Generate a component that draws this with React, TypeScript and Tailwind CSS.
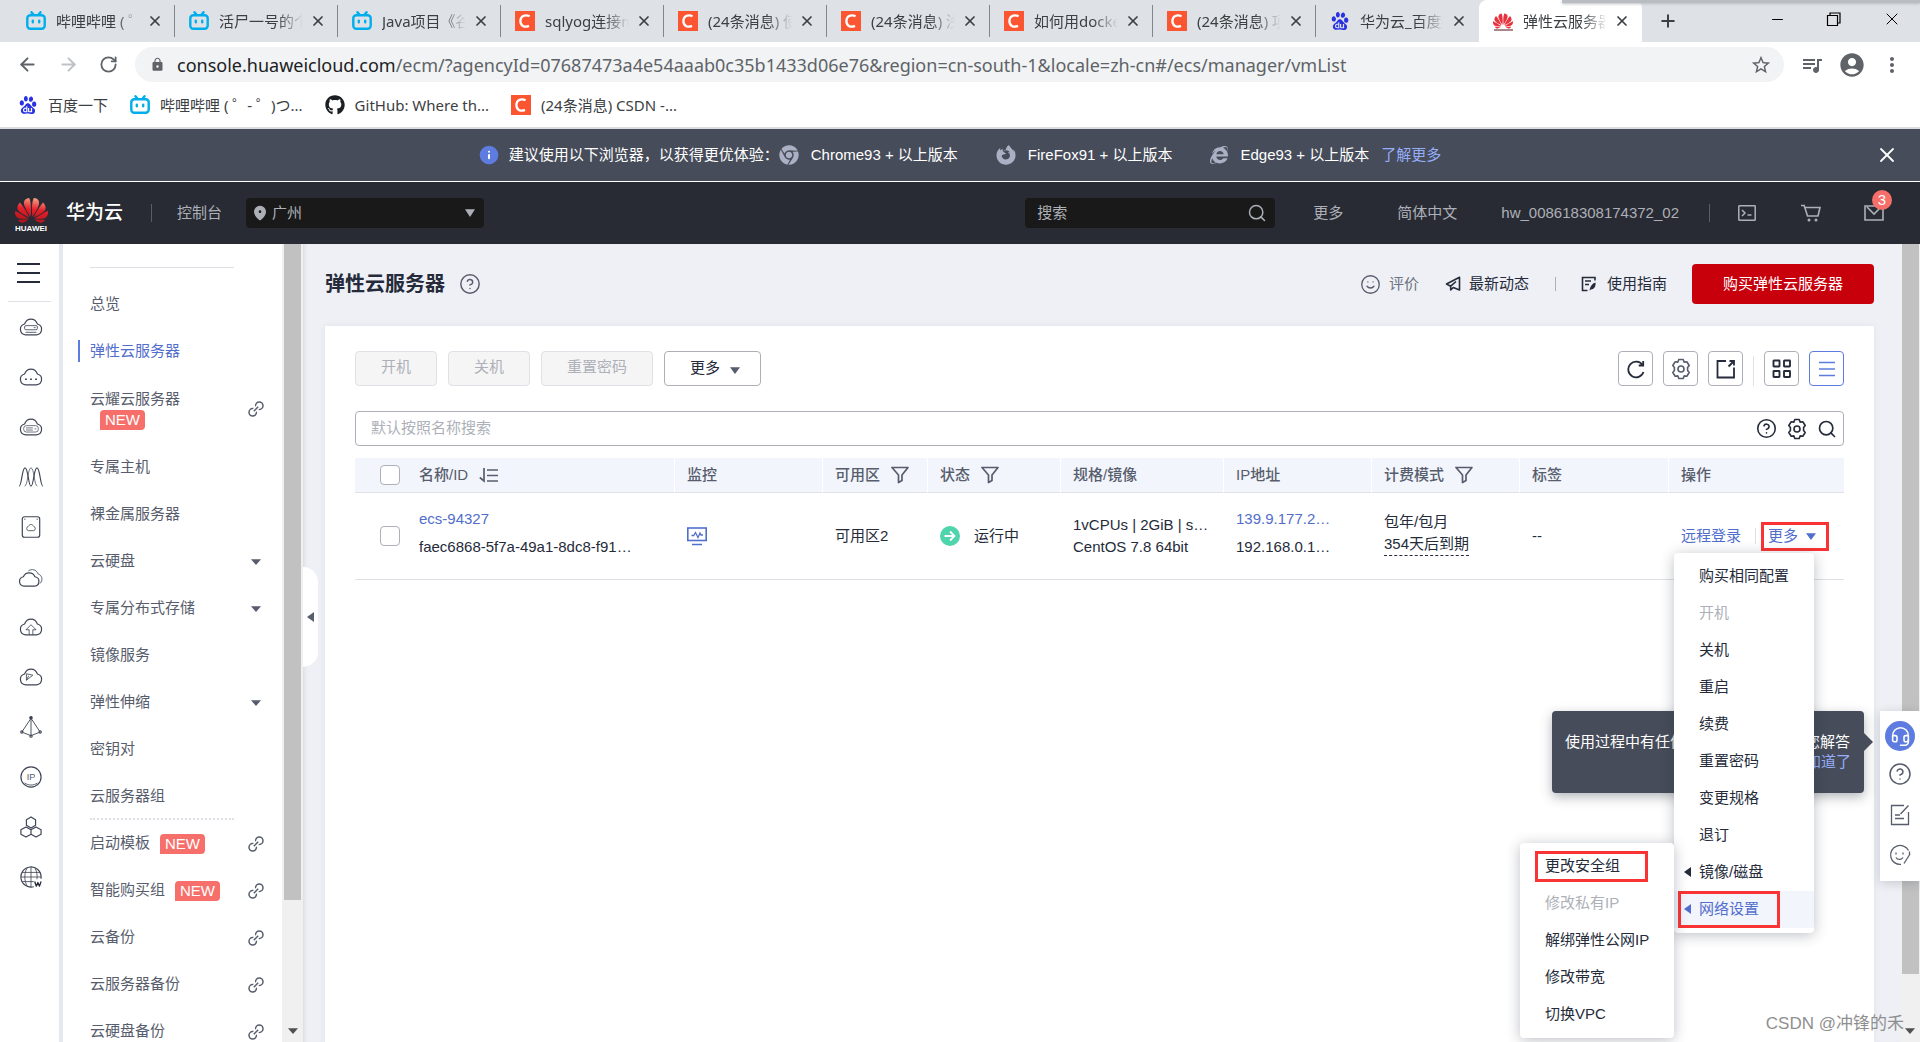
import type { ReactNode } from "react";
import {
  ArrowLeft,
  ArrowRight,
  CircleHelp,
  Headset,
  Info,
  MapPin,
  Minus,
  Plus,
  RotateCw,
  Search,
  Smile,
  X,
} from "lucide-react";
import { FaChrome, FaFirefoxBrowser, FaGithub, FaInternetExplorer } from "react-icons/fa";
import { MdAccountCircle, MdLock, MdMoreVert, MdQueueMusic, MdStarBorder } from "react-icons/md";
import { SiBaidu, SiHuawei } from "react-icons/si";

type SiteIcon = "bili" | "csdn" | "baidu" | "huawei" | "github";

interface BrowserTab {
  icon: SiteIcon;
  title: string;
  active?: boolean;
}

interface NavItem {
  label: string;
  active?: boolean;
  isNew?: boolean;
  wrapped?: boolean;
  external?: boolean;
  expandable?: boolean;
  dashed?: boolean;
}

interface MenuEntry {
  label: string;
  disabled?: boolean;
  submenu?: boolean;
  active?: boolean;
}

const browserTabs: BrowserTab[] = [
  { icon: "bili", title: "哔哩哔哩 ( ゜- ゜)つロ" },
  { icon: "bili", title: "活尸一号的个人空间" },
  { icon: "bili", title: "Java项目《谷粒商城》" },
  { icon: "csdn", title: "sqlyog连接mysql" },
  { icon: "csdn", title: "(24条消息) 使用教程" },
  { icon: "csdn", title: "(24条消息) 浅谈部署" },
  { icon: "csdn", title: "如何用docker部署" },
  { icon: "csdn", title: "(24条消息) 项目部署" },
  { icon: "baidu", title: "华为云_百度搜索" },
  { icon: "huawei", title: "弹性云服务器控制台", active: true },
];

const bookmarks: { icon: SiteIcon; title: string }[] = [
  { icon: "baidu", title: "百度一下" },
  { icon: "bili", title: "哔哩哔哩 ( ゜- ゜)つ..." },
  { icon: "github", title: "GitHub: Where th..." },
  { icon: "csdn", title: "(24条消息) CSDN -..." },
];

const navItems: NavItem[] = [
  { label: "总览" },
  { label: "弹性云服务器", active: true },
  { label: "云耀云服务器", isNew: true, wrapped: true, external: true },
  { label: "专属主机" },
  { label: "裸金属服务器" },
  { label: "云硬盘", expandable: true },
  { label: "专属分布式存储", expandable: true },
  { label: "镜像服务" },
  { label: "弹性伸缩", expandable: true },
  { label: "密钥对" },
  { label: "云服务器组", dashed: true },
  { label: "启动模板", isNew: true, external: true },
  { label: "智能购买组", isNew: true, external: true },
  { label: "云备份", external: true },
  { label: "云服务器备份", external: true },
  { label: "云硬盘备份", external: true },
];

const moreMenu: MenuEntry[] = [
  { label: "购买相同配置" },
  { label: "开机", disabled: true },
  { label: "关机" },
  { label: "重启" },
  { label: "续费" },
  { label: "重置密码" },
  { label: "变更规格" },
  { label: "退订" },
  { label: "镜像/磁盘", submenu: true },
  { label: "网络设置", submenu: true, active: true },
];

const networkMenu: MenuEntry[] = [
  { label: "更改安全组", active: true },
  { label: "修改私有IP", disabled: true },
  { label: "解绑弹性公网IP" },
  { label: "修改带宽" },
  { label: "切换VPC" },
];

const CLOUD = "M8 20.500a6 6 0 0 1-1-11.800C8.500 5 11 3.500 14 3.500s5.500 1.500 7 5.200A6 6 0 0 1 20 20.500z";

export default function App() {
  return (
    <div className="flex h-screen flex-col overflow-hidden bg-white font-['Liberation_Sans','Noto_Sans_CJK_SC',sans-serif] text-[15px] text-[#252b3a]">
      <BrowserChrome />
      <BrowserNotice />
      <ConsoleHeader />
      <div className="relative flex min-h-0 flex-1">
        <ServiceRail />
        <SideNav />
        <Workspace />
        <PageScrollbar />
        <SupportDock />
        <p className="pointer-events-none absolute right-4 bottom-0 z-40 text-[17px] leading-9 text-[#8f8f8f]">
          CSDN @冲锋的禾
        </p>
      </div>
    </div>
  );
}

function BrowserChrome() {
  return (
    <header className="relative shrink-0 border-b-2 border-[#dadce0] font-['Noto_Sans','Noto_Sans_CJK_SC',sans-serif] text-[#3c4043]">
      <div className="absolute top-0 right-0 h-[3px] w-[358px] bg-[#b9bcc1] shadow-[0_1px_3px_#b9bcc1]" />
      <div className="flex h-[42px] items-center bg-[#dee1e6] pl-3">
        {browserTabs.map((tab, index) => (
          <div
            key={index}
            className={
              tab.active
                ? "flex h-full w-[163px] items-center rounded-t-lg bg-white pr-2 pl-[14px]"
                : "flex h-full w-[163px] items-center pl-[14px]"
            }
          >
            <SiteGlyph name={tab.icon} />
            <button className="ml-[10px] w-[84px] overflow-hidden text-left whitespace-nowrap [mask-image:linear-gradient(to_right,#000_70%,transparent)]">
              {tab.title}
            </button>
            <button aria-label="关闭标签页" className="ml-[7px]">
              <X className="size-4" strokeWidth={2.6} />
            </button>
            {!tab.active && index < 8 && <span className="ml-auto h-8 w-px bg-[#80868b]" />}
          </div>
        ))}
        <button aria-label="新标签页" className="ml-4">
          <Plus className="size-5" strokeWidth={2.4} />
        </button>
        <div className="mr-[18px] ml-auto flex items-center gap-10 pb-1 text-black">
          <button aria-label="最小化">
            <Minus className="size-[17px]" strokeWidth={1.4} />
          </button>
          <button aria-label="还原">
            <svg viewBox="0 0 16 16" className="size-4" fill="none" stroke="currentColor" strokeWidth="1.2">
              <path d="M1.500 4.500h10v10h-10zM4 4.500V2h10v10h-2.500" />
            </svg>
          </button>
          <button aria-label="关闭">
            <X className="size-5" strokeWidth={1.2} />
          </button>
        </div>
      </div>
      <div className="flex h-[45px] items-center pr-4 pl-[17px] text-[#5f6368]">
        <button aria-label="后退" className="mr-5">
          <ArrowLeft className="size-[21px]" strokeWidth={2.2} />
        </button>
        <button aria-label="前进" className="mr-5 text-[#bdc1c6]">
          <ArrowRight className="size-[21px]" strokeWidth={2.2} />
        </button>
        <button aria-label="重新加载" className="mr-[17px]">
          <RotateCw className="size-[19px]" strokeWidth={2.3} />
        </button>
        <div className="mr-4 flex h-[35px] flex-1 items-center rounded-full bg-[#f1f3f4] pr-3 pl-[15px]">
          <MdLock className="size-[15px]" />
          <p className="ml-3 flex-1 text-[18px] leading-6 whitespace-nowrap">
            <span className="text-[#202124]">console.huaweicloud.com</span>
            /ecm/?agencyId=07687473a4e54aaab0c35b1433d06e76&amp;region=cn-south-1&amp;locale=zh-cn#/ecs/manager/vmList
          </p>
          <MdStarBorder className="size-[22px]" />
        </div>
        <MdQueueMusic className="mr-[14px] size-6" />
        <MdAccountCircle className="mr-[14px] size-[28px]" />
        <MdMoreVert className="size-6" />
      </div>
      <nav className="flex h-10 items-center gap-[22px] pb-1 pl-[18px]">
        {bookmarks.map((bookmark) => (
          <a key={bookmark.title} href="#" className="flex items-center gap-[10px] whitespace-nowrap">
            <SiteGlyph name={bookmark.icon} />
            {bookmark.title}
          </a>
        ))}
      </nav>
    </header>
  );
}

function SiteGlyph({ name }: { name: SiteIcon }) {
  if (name === "bili") {
    return (
      <svg viewBox="0 0 20 20" className="size-5 shrink-0" fill="none" stroke="#00aeec" strokeWidth="2.400" strokeLinecap="round">
        <rect x="1.300" y="4.300" width="17.400" height="13.400" rx="3" />
        <path d="M5.500 1.300l2 2.500M14.500 1.300l-2 2.500M6.800 9.700v1.500M13.200 9.700v1.500" />
      </svg>
    );
  }
  if (name === "csdn") {
    return (
      <svg viewBox="0 0 20 20" className="size-5 shrink-0" fill="none">
        <rect width="20" height="20" fill="#fc5531" />
        <path d="M14.600 5.200C9.500 2.800 5.500 5.600 5.400 10c0 4.600 3.800 6.900 8.600 4.900" stroke="#fff" strokeWidth="2.300" />
      </svg>
    );
  }
  if (name === "baidu") {
    return <SiBaidu className="size-5 shrink-0 p-px text-[#2932e1]" />;
  }
  if (name === "huawei") {
    return (
      <span className="flex w-5 shrink-0 flex-col items-center">
        <SiHuawei className="size-5 text-[#e8323c]" />
        <span className="-mt-[2px] h-[2px] w-[19px] bg-[#a7898c]" />
      </span>
    );
  }
  return <FaGithub className="size-5 shrink-0 text-[#1b1f23]" />;
}

function BrowserNotice() {
  return (
    <section className="flex h-[53px] shrink-0 items-center border-b border-white bg-[#464c59] px-[21px] text-white">
      <div className="flex-1" />
      <Info className="size-5 fill-[#5e7ce0] text-white [&>circle]:stroke-[#5e7ce0]" strokeWidth={2.4} />
      <span className="ml-[10px]">建议使用以下浏览器，以获得更优体验：</span>
      <FaChrome className="size-5 text-[#adb0c4]" />
      <span className="ml-3">Chrome93 + 以上版本</span>
      <FaFirefoxBrowser className="ml-[38px] size-5 text-[#adb0c4]" />
      <span className="ml-3">FireFox91 + 以上版本</span>
      <FaInternetExplorer className="ml-[38px] size-[18px] text-[#adb0c4]" />
      <span className="ml-3">Edge93 + 以上版本</span>
      <a href="#" className="ml-3 text-[#96adfa]">
        了解更多
      </a>
      <div className="flex flex-1 justify-end">
        <button aria-label="关闭提示">
          <X className="size-6" strokeWidth={1.8} />
        </button>
      </div>
    </section>
  );
}

function ConsoleHeader() {
  return (
    <header className="flex h-[62px] shrink-0 items-center bg-[#282b33] text-[#adb0b8]">
      <div className="ml-[14px] flex w-[34px] flex-col items-center">
        <svg className="size-0">
          <defs>
            <linearGradient id="petal" x1="0.6" y1="0" x2="0.4" y2="1">
              <stop offset="0" stopColor="#f6a184" />
              <stop offset="0.450" stopColor="#e5202a" />
              <stop offset="1" stopColor="#b3121b" />
            </linearGradient>
          </defs>
        </svg>
        <SiHuawei className="-mb-[3px] size-[33px] [&>path]:fill-[url(#petal)]" />
        <span className="text-[8px] leading-[9px] font-bold text-white">HUAWEI</span>
      </div>
      <strong className="ml-[18px] text-[19px] font-medium text-white">华为云</strong>
      <span className="ml-7 h-[18px] w-px bg-[#575d6c]" />
      <a href="#" className="ml-[25px]">
        控制台
      </a>
      <label className="ml-6 flex h-[30px] w-[238px] items-center rounded-sm bg-[#191919] px-[6px]">
        <MapPin className="size-4 fill-current [&>circle]:fill-[#191919]" />
        <select aria-label="区域" className="ml-1 flex-1 appearance-none bg-transparent outline-none">
          <option>广州</option>
        </select>
        <Triangle className="mr-[3px] h-2 w-[10px]" />
      </label>
      <label className="mr-[38px] ml-auto flex h-[30px] w-[250px] items-center rounded-sm bg-[#191919] px-2">
        <input
          aria-label="搜索"
          placeholder="搜索"
          className="min-w-0 flex-1 bg-transparent px-1 outline-none placeholder:text-[#adb0b8]"
        />
        <Search className="size-5" strokeWidth={1.8} />
      </label>
      <a href="#" className="mr-[54px]">
        更多
      </a>
      <a href="#" className="mr-11">
        简体中文
      </a>
      <a href="#">hw_008618308174372_02</a>
      <span className="ml-[30px] h-[18px] w-px bg-[#575d6c]" />
      <button aria-label="命令行" className="ml-7">
        <svg viewBox="0 0 18 16" className="h-4 w-[18px]" fill="none" stroke="currentColor" strokeWidth="1.500">
          <rect x="0.800" y="0.800" width="16.400" height="14.400" rx="0.500" />
          <path d="M4 5l3 3-3 3M9.500 10h4" />
        </svg>
      </button>
      <button aria-label="购物车" className="ml-[45px]">
        <svg viewBox="0 0 20 18" className="h-[18px] w-5" fill="none" stroke="currentColor" strokeWidth="1.600">
          <path d="M0 1.500h3.200L6.500 12H17l2-8.500H4" />
          <circle cx="8" cy="16" r="0.700" />
          <circle cx="15" cy="16" r="0.700" />
        </svg>
      </button>
      <button aria-label="消息" className="relative mr-9 ml-[43px]">
        <svg viewBox="0 0 20 16" className="h-4 w-5" fill="none" stroke="currentColor" strokeWidth="1.600">
          <path d="M1 1h18v14H1zM3 2l7 7 7-7" />
        </svg>
        <span className="absolute -top-[15px] -right-2 flex size-5 items-center justify-center rounded-full bg-[#f66f6a] leading-5 text-white">
          3
        </span>
      </button>
    </header>
  );
}

function Triangle({ className }: { className: string }) {
  return (
    <svg viewBox="0 0 10 7" preserveAspectRatio="none" className={className} fill="currentColor">
      <path d="M0 .3h10L5 7z" />
    </svg>
  );
}

function LeftTriangle() {
  return (
    <svg viewBox="0 0 7 10" className="h-[10px] w-[7px] shrink-0" fill="currentColor">
      <path d="M7 0v10L0 5z" />
    </svg>
  );
}

function RailIcon({ label, children }: { label: string; children: ReactNode }) {
  return (
    <a href="#" aria-label={label} className="flex h-[50px] items-center justify-center pl-[3px]">
      <svg viewBox="0 0 28 24" className="h-[22px] w-[26px]" fill="none" stroke="#3f4554" strokeWidth="1.300" strokeLinejoin="round">
        {children}
      </svg>
    </a>
  );
}

function ServiceRail() {
  return (
    <aside className="w-[63px] shrink-0 border-r-4 border-[#e6e8f0] bg-white">
      <div className="mr-2 ml-2 flex h-[58px] items-center border-b border-[#dfe1e6] pl-[9px]">
        <button aria-label="服务列表" className="flex flex-col gap-[7px]">
          <span className="h-[2px] w-[23px] bg-[#252b3a]" />
          <span className="h-[2px] w-[23px] bg-[#252b3a]" />
          <span className="h-[2px] w-[23px] bg-[#252b3a]" />
        </button>
      </div>
      <RailIcon label="弹性云服务器">
        <path d={CLOUD} />
        <rect x="7" y="10.500" width="14" height="4.500" rx="1.500" strokeWidth="0.900" />
        <path d="M17 12.700h2M8 17.800h12" strokeWidth="0.900" />
      </RailIcon>
      <RailIcon label="云耀云服务器">
        <path d={CLOUD} />
        <path d="M7.500 14.500h2M13 14.500h2M18.500 14.500h2" strokeWidth="1.800" />
      </RailIcon>
      <RailIcon label="裸金属服务器">
        <path d={CLOUD} />
        <rect x="6" y="10.500" width="16" height="7" rx="3" strokeWidth="0.800" />
        <path d="M8.500 13h7.500M8.500 15.300h7.500M18 14h1.800" strokeWidth="0.800" />
      </RailIcon>
      <RailIcon label="弹性伸缩">
        <path d="M1 22c3 0 3-20 6.500-20S11 22 14 22s3-20 6.500-20S24 22 27 22" />
        <path d="M7 22c3.500 0 3.500-20 7-20s3.500 20 7 20" strokeWidth="0.800" />
      </RailIcon>
      <RailIcon label="镜像服务">
        <rect x="4.500" y="0.800" width="19" height="22.400" rx="2.500" />
        <path d="M11 16a2.400 2.400 0 0 1 0-4.600c1.500-2.800 4.500-2.800 6 0A2.400 2.400 0 0 1 17 16zM6.500 3.500h1.500M20 3.500h1.500" strokeWidth="0.900" />
      </RailIcon>
      <RailIcon label="云硬盘">
        <path d="M6.500 22a5.200 5.200 0 0 1-.8-10.300C7 8.500 9.500 7.500 12 7.500s5 1 6.300 4.200A5.200 5.200 0 0 1 18 22z" />
        <path d="M11 5.500c4-3 9-1.500 10.500 3C26 10 27.500 15 24 19" strokeWidth="0.900" />
      </RailIcon>
      <RailIcon label="云备份">
        <path d={CLOUD} />
        <path d="M12 20.500V15H8.500L14 9.500l5.500 5.500H16v5.500" strokeWidth="0.900" />
      </RailIcon>
      <RailIcon label="云服务器备份">
        <path d={CLOUD} />
        <path d="M9 15.500V8.500l7 1.500zM9 15.500l2.500-5" strokeWidth="0.900" />
      </RailIcon>
      <RailIcon label="虚拟私有云">
        <path d="M14 2.500v19M14 2.500l10 15-10 4-10-4z" strokeWidth="1" />
        <circle cx="14" cy="2" r="1.300" fill="#252b3a" />
        <circle cx="14" cy="22" r="1.200" fill="#fff" />
        <circle cx="4" cy="17.500" r="1.200" fill="#fff" />
        <circle cx="24" cy="17.500" r="1.200" fill="#fff" />
      </RailIcon>
      <RailIcon label="弹性公网IP">
        <circle cx="14" cy="12" r="11" />
        <text x="14" y="15.500" fontSize="10" textAnchor="middle" fill="#575d6c" stroke="none">
          IP
        </text>
        <path d="M7 18.500c4 3 10 3 14 0" strokeWidth="0.900" />
      </RailIcon>
      <RailIcon label="对象存储">
        <path d="M14 1l5 3v6l-5 3-5-3V4zM8.500 12l5.500 3v5l-5.500 3L3 20v-5zM19.500 12l5.500 3v5l-5.500 3-5.500-3v-5z" />
      </RailIcon>
      <RailIcon label="域名注册">
        <path d="M17 22.600A11 11 0 1 1 25 12v2" />
        <path d="M9.500 2.500c-3 6-3 13 0 19M14 1v22M18.500 2.500c2 4 2.500 8 2 12M4 7h20M3 12h22M4 17h13" strokeWidth="0.900" />
        <path d="M18 17l1.800 5 1.700-4 1.700 4 1.800-5" stroke="#252b3a" strokeWidth="1.400" />
      </RailIcon>
    </aside>
  );
}

function SideNav() {
  return (
    <>
      <nav className="w-[219px] shrink-0 overflow-hidden bg-white pt-[23px] text-[#575d6c]">
        <div className="mr-12 mb-[13px] ml-[27px] border-b border-[#dfe1e6]" />
        {navItems.map((item) => (
          <a
            key={item.label}
            href="#"
            className={
              item.wrapped
                ? "flex h-[69px] items-center justify-between pr-[18px] pb-[2px] pl-[27px]"
                : "relative flex h-[47px] items-center justify-between pr-[18px] pl-[27px]"
            }
          >
            {item.active && <span className="absolute top-3 left-[15px] h-[22px] w-[2px] bg-[#5e7ce0]" />}
            <span
              className={
                item.wrapped
                  ? "leading-[23px]"
                  : item.active
                    ? "flex items-center text-[#526ecc]"
                    : "flex items-center"
              }
            >
              {item.label}
              {item.isNew && (
                <span
                  className={
                    item.wrapped
                      ? "ml-[10px] block w-[45px] rounded-t rounded-br bg-[#f66f6a] text-center leading-5 text-white"
                      : "ml-[10px] w-[45px] rounded-t rounded-br bg-[#f66f6a] text-center leading-5 text-white"
                  }
                >
                  NEW
                </span>
              )}
            </span>
            {item.external && <ChainIcon />}
            {item.expandable && <Triangle className="mr-[3px] h-[6px] w-[10px]" />}
            {item.dashed && (
              <span className="absolute bottom-0 left-[27px] w-36 border-b-2 border-dotted border-[#dfe1e6]" />
            )}
          </a>
        ))}
      </nav>
      <div className="flex w-[21px] shrink-0 flex-col items-center bg-[#f0f0f0]">
        <div className="w-[17px] flex-[656] bg-[#c1c1c1]" />
        <div className="flex flex-[134] items-end pb-2 text-[#505050]">
          <Triangle className="h-[6px] w-[10px]" />
        </div>
      </div>
    </>
  );
}

function ChainIcon() {
  return (
    <svg viewBox="0 0 16 16" className="size-4" fill="none" stroke="#575d6c" strokeWidth="1.500">
      <circle cx="11.300" cy="4.700" r="3.700" />
      <circle cx="4.700" cy="11.300" r="3.700" />
      <path d="M6 10l4.200-4.200" stroke="#fff" strokeWidth="4.500" />
      <path d="M5.800 10.200l4.400-4.400" />
    </svg>
  );
}

function GearIcon() {
  return (
    <svg viewBox="0 0 22 22" className="size-[22px]" fill="none" stroke="currentColor" strokeWidth="1.600" strokeLinejoin="round">
      <path d="M8.800 1.500h4.400l1 2.600 2.600-.3 2.400 3.700-1.600 2v3l1.600 2-2.400 3.700-2.600-.3-1 2.600H8.800l-1-2.600-2.600.3-2.400-3.700 1.600-2v-3l-1.600-2 2.400-3.700 2.600.3z" />
      <circle cx="11" cy="11" r="3" />
    </svg>
  );
}

function Workspace() {
  return (
    <main className="relative flex min-w-0 flex-1 flex-col bg-[#eef0f5] pt-5 pr-[26px] pl-[22px] shadow-[inset_4px_0_4px_-3px_#d5d7de]">
      <button
        aria-label="收起导航"
        className="absolute top-[323px] left-0 flex h-[100px] w-[15px] items-center justify-center rounded-r-2xl bg-white text-[#575d6c]"
      >
        <LeftTriangle />
      </button>
      <div className="flex h-10 items-center">
        <h1 className="text-xl font-bold">弹性云服务器</h1>
        <CircleHelp className="ml-[14px] size-[22px] text-[#575d6c]" strokeWidth={1.6} />
        <div className="ml-auto flex items-center">
          <Smile className="size-[21px] text-[#575d6c]" strokeWidth={1.5} />
          <a href="#" className="ml-2 text-[#6c7280]">
            评价
          </a>
          <svg viewBox="0 0 16 16" className="ml-[26px] size-4" fill="none" stroke="currentColor" strokeWidth="1.600" strokeLinejoin="round">
            <path d="M14.500 1.200L1.500 8l4.200 2.200V14l2.600-2.500 6.200 2.500zM5.700 10.200l5.300-4.700" />
          </svg>
          <a href="#" className="ml-2">
            最新动态
          </a>
          <span className="mr-[25px] ml-[26px] h-[14px] w-px bg-[#adb0b8]" />
          <svg viewBox="0 0 16 16" className="size-4" fill="none" stroke="currentColor" strokeWidth="1.600">
            <path d="M14 4.500V1.500H1.500v13h5M4 5h6M4 8.500h4" />
            <path d="M8.500 14.500c.5-4 2.500-7 6-8 .5 4-1.500 7-4.500 7z" fill="currentColor" stroke="none" />
          </svg>
          <a href="#" className="ml-[10px]">
            使用指南
          </a>
          <button className="ml-[25px] h-10 w-[182px] rounded-sm bg-[#c7000b] text-white">购买弹性云服务器</button>
        </div>
      </div>
      <section className="mt-[22px] flex-1 bg-white px-[30px] pt-[25px] shadow-[0_0_6px_#dfe1e9]">
        <Toolbar />
        <label className="mt-[25px] flex h-[35px] items-center gap-[9px] rounded-sm border border-[#adb0b8] pr-[6px] pl-[15px]">
          <input
            aria-label="搜索云服务器"
            placeholder="默认按照名称搜索"
            className="min-w-0 flex-1 outline-none placeholder:text-[#adb0b8]"
          />
          <CircleHelp className="size-[21px]" strokeWidth={1.8} />
          <GearIcon />
          <Search className="size-5" strokeWidth={2} />
        </label>
        <ServerTable />
      </section>
    </main>
  );
}

function Toolbar() {
  return (
    <div className="flex h-[35px] items-stretch">
      <div className="flex gap-[11px]">
        {["开机", "关机", "重置密码"].map((label) => (
          <button key={label} disabled className="rounded-sm border border-[#dfe1e6] bg-[#f5f5f6] px-[25px] pb-[2px] text-[#adb0b8]">
            {label}
          </button>
        ))}
        <button className="flex items-center gap-[10px] rounded-sm border border-[#adb0b8] pr-5 pl-[25px]">
          更多
          <Triangle className="mt-1 h-[7px] w-[10px] text-[#575d6c]" />
        </button>
      </div>
      <div className="ml-auto flex gap-[10px]">
        <ToolButton label="刷新">
          <svg viewBox="0 0 20 20" className="size-5" fill="none" stroke="currentColor" strokeWidth="1.800">
            <path d="M17.500 13A7.800 7.800 0 1 1 16.500 6M17.200 2v4.500h-4.500" />
          </svg>
        </ToolButton>
        <ToolButton label="设置" muted>
          <GearIcon />
        </ToolButton>
        <ToolButton label="导出">
          <svg viewBox="0 0 20 20" className="size-5" fill="none" stroke="currentColor" strokeWidth="1.800">
            <path d="M10 2H1.500v16.500H18V8.500M12.500 7.500l5-5M13.500 2H18v4.500" />
          </svg>
        </ToolButton>
        <span className="mt-[5px] w-px bg-[#dfe1e6]" />
        <ToolButton label="卡片视图">
          <svg viewBox="0 0 20 20" className="size-5" fill="none" stroke="currentColor" strokeWidth="1.900">
            <rect x="1.500" y="1.500" width="6" height="6" rx="0.500" />
            <rect x="12" y="1.500" width="6" height="6" rx="0.500" />
            <rect x="1.500" y="12" width="6" height="6" rx="0.500" />
            <rect x="12" y="12" width="6" height="6" rx="0.500" />
          </svg>
        </ToolButton>
        <button
          aria-label="列表视图"
          className="flex w-[35px] items-center justify-center rounded-sm border border-[#5e7ce0] text-[#5e7ce0]"
        >
          <svg viewBox="0 0 16 18" className="h-[18px] w-4" stroke="currentColor" strokeWidth="1.700">
            <path d="M0 2.500h16M0 9h16M0 15.500h16" />
          </svg>
        </button>
      </div>
    </div>
  );
}

function ToolButton({ label, muted, children }: { label: string; muted?: boolean; children: ReactNode }) {
  return (
    <button
      aria-label={label}
      className={
        muted
          ? "flex w-[35px] items-center justify-center rounded-sm border border-[#adb0b8] text-[#575d6c]"
          : "flex w-[35px] items-center justify-center rounded-sm border border-[#adb0b8]"
      }
    >
      {children}
    </button>
  );
}

function HeadCell({ children }: { children: ReactNode }) {
  return (
    <th className="border-b border-l border-b-[#dfe1e6] border-l-white p-0 pl-3 text-left font-medium whitespace-nowrap">
      <span className="flex items-center gap-[11px]">{children}</span>
    </th>
  );
}

function FilterIcon() {
  return (
    <svg viewBox="0 0 18 18" className="size-[18px]" fill="none" stroke="currentColor" strokeWidth="1.700" strokeLinejoin="round">
      <path d="M1 1.500h16L11 9v5.500L7.500 16.500V9z" />
    </svg>
  );
}

function ServerTable() {
  return (
    <table className="mt-3 w-full table-fixed border-separate border-spacing-0">
      <colgroup>
        <col className="w-[51px]" />
        <col className="w-[268px]" />
        <col className="w-[148px]" />
        <col className="w-[105px]" />
        <col className="w-[133px]" />
        <col className="w-[163px]" />
        <col className="w-[148px]" />
        <col className="w-[148px]" />
        <col className="w-[149px]" />
        <col className="w-[176px]" />
      </colgroup>
      <thead className="bg-[#f2f5fc] text-[#575d6c]">
        <tr className="h-[35px]">
          <th className="border-b border-[#dfe1e6] p-0 pl-[25px]">
            <Checkbox label="全选" />
          </th>
          <th className="border-b border-[#dfe1e6] p-0 pl-[13px] text-left font-medium">
            <span className="flex items-center gap-[11px]">
              名称/ID
              <svg viewBox="0 0 19 16" className="h-4 w-[19px]" fill="none" stroke="currentColor" strokeWidth="1.700">
                <path d="M5 1v13L.8 10.500M8 3h11M8 8.500h11M8 14h11" />
              </svg>
            </span>
          </th>
          <HeadCell>监控</HeadCell>
          <HeadCell>
            可用区
            <FilterIcon />
          </HeadCell>
          <HeadCell>
            状态
            <FilterIcon />
          </HeadCell>
          <HeadCell>规格/镜像</HeadCell>
          <HeadCell>IP地址</HeadCell>
          <HeadCell>
            计费模式
            <FilterIcon />
          </HeadCell>
          <HeadCell>标签</HeadCell>
          <HeadCell>操作</HeadCell>
        </tr>
      </thead>
      <tbody>
        <tr className="h-[87px] [&>td]:border-b [&>td]:border-[#dfe1e6] [&>td]:pt-0 [&>td]:pr-0 [&>td]:pl-[13px]">
          <td className="pb-0">
            <div className="pl-3">
              <Checkbox label="选择 ecs-94327" />
            </div>
          </td>
          <td className="pb-[6px] leading-7">
            <a href="#" className="block text-[#526ecc]">
              ecs-94327
            </a>
            <p>faec6868-5f7a-49a1-8dc8-f91…</p>
          </td>
          <td className="pb-0">
            <svg viewBox="0 0 20 19" className="h-[19px] w-5" fill="none" stroke="#526ecc" strokeWidth="1.600">
              <rect x="0.800" y="1" width="18.400" height="12.500" />
              <path d="M5 17.500h10M4.500 8.500h2.200l1.800-3 2.500 5 2-4.500 1 2h2" strokeWidth="1.300" />
            </svg>
          </td>
          <td className="pb-0">可用区2</td>
          <td className="pb-0">
            <span className="flex items-center gap-[14px]">
              <svg viewBox="0 0 20 20" className="size-5" fill="none">
                <circle cx="10" cy="10" r="10" fill="#50d4ab" />
                <path d="M4.500 10h10M10 5.500l4.500 4.500-4.500 4.500" stroke="#fff" strokeWidth="1.800" />
              </svg>
              运行中
            </span>
          </td>
          <td className="pb-0 leading-[22px]">
            <p>1vCPUs | 2GiB | s…</p>
            <p>CentOS 7.8 64bit</p>
          </td>
          <td className="pb-[6px] leading-7">
            <p className="text-[#526ecc]">139.9.177.2…</p>
            <p>192.168.0.1…</p>
          </td>
          <td className="pb-[6px] leading-[22px]">
            <p>包年/包月</p>
            <span className="inline-block border-b border-dashed border-[#252b3a]">354天后到期</span>
          </td>
          <td className="pb-0">--</td>
          <td className="pb-0">
            <div className="flex items-center whitespace-nowrap text-[#526ecc]">
              <a href="#">远程登录</a>
              <span className="mr-[5px] ml-[14px] h-4 w-px bg-[#dfe1e6]" />
              <div className="relative">
                <button className="flex h-[29px] w-[68px] items-center gap-2 border-3 border-[#fa3434] pl-1">
                  更多
                  <Triangle className="mt-px h-[7px] w-[10px]" />
                </button>
                <MoreMenu />
              </div>
            </div>
          </td>
        </tr>
      </tbody>
    </table>
  );
}

function Checkbox({ label }: { label: string }) {
  return (
    <input
      type="checkbox"
      aria-label={label}
      className="block size-5 appearance-none rounded-sm border border-[#adb0b8] bg-white"
    />
  );
}

function MoreMenu() {
  return (
    <ul className="absolute top-[31px] right-[15px] z-20 w-[140px] rounded-sm bg-white py-[5px] text-[#252b3a] shadow-[0_2px_14px_rgba(37,43,58,0.3)]">
      {moreMenu.map((entry) => (
        <li key={entry.label} className={entry.active ? "relative bg-[#f2f5fc] text-[#526ecc]" : "relative"}>
          <button
            disabled={entry.disabled}
            className="flex h-[37px] w-full items-center pl-[10px] disabled:text-[#adb0b8]"
          >
            <span className="w-[15px]">{entry.submenu && <LeftTriangle />}</span>
            {entry.label}
          </button>
          {entry.active && (
            <>
              <span className="pointer-events-none absolute inset-y-0 left-1 w-[102px] border-3 border-[#fa3434]" />
              <NetworkMenu />
            </>
          )}
        </li>
      ))}
    </ul>
  );
}

function NetworkMenu() {
  return (
    <ul className="absolute -top-12 right-full w-[154px] rounded-sm bg-white py-[5px] text-[#252b3a] shadow-[0_2px_14px_rgba(37,43,58,0.3)]">
      {networkMenu.map((entry) => (
        <li key={entry.label} className="relative">
          <button disabled={entry.disabled} className="flex h-[37px] w-full items-center pl-[25px] disabled:text-[#adb0b8]">
            {entry.label}
          </button>
          {entry.active && (
            <span className="pointer-events-none absolute inset-y-[3px] left-[15px] w-[113px] border-3 border-[#fa3434]" />
          )}
        </li>
      ))}
    </ul>
  );
}

function PageScrollbar() {
  return (
    <div className="flex w-5 shrink-0 flex-col items-center bg-[#f0f0f0]">
      <div className="w-[17px] flex-[730] bg-[#c1c1c1]" />
      <div className="flex flex-[60] items-end pb-2 text-[#505050]">
        <Triangle className="h-[6px] w-[10px]" />
      </div>
    </div>
  );
}

function SupportDock() {
  return (
    <>
      <aside className="absolute top-[467px] right-14 z-10 h-[82px] w-[312px] rounded bg-[#464c59] px-[13px] pt-[21px] leading-5 whitespace-nowrap text-white shadow-[0_4px_12px_rgba(37,43,58,0.35)]">
        <p>使用过程中有任何问题，我们随时为您解答</p>
        <a href="#" className="block text-right text-[#96adfa]">
          我知道了
        </a>
        <span className="absolute top-[22px] left-full border-y-[9px] border-l-[9px] border-y-transparent border-l-[#464c59]" />
      </aside>
      <aside className="absolute top-[467px] right-0 z-10 flex h-[170px] w-10 flex-col items-center bg-white pt-[10px] text-[#575d6c] shadow-[0_2px_10px_rgba(37,43,58,0.2)]">
        <button aria-label="在线客服" className="flex size-[30px] items-center justify-center rounded-full bg-[#5e7ce0] text-white">
          <Headset className="size-[21px]" strokeWidth={1.8} />
        </button>
        <button aria-label="帮助" className="mt-[11px]">
          <CircleHelp className="size-6" strokeWidth={1.5} />
        </button>
        <button aria-label="反馈" className="mt-[18px]">
          <svg viewBox="0 0 20 22" className="h-[22px] w-5" fill="none" stroke="currentColor" strokeWidth="1.300">
            <path d="M14 1.500H1.500v19h17V8M18.500 1.500L10.500 10M5 11h5M5 14.500h9" />
          </svg>
        </button>
        <button aria-label="评价" className="mt-[18px]">
          <svg viewBox="0 0 22 22" className="size-[22px]" fill="none" stroke="currentColor" strokeWidth="1.300">
            <path d="M19.500 6.500A9.500 9.500 0 1 0 12 20.400M7 8.500v2M14 8.500v2M7 13.500c1.500 2.500 5.500 2.500 7 0M21 10l-6 9.500M20.500 7.500v3" />
          </svg>
        </button>
      </aside>
    </>
  );
}
